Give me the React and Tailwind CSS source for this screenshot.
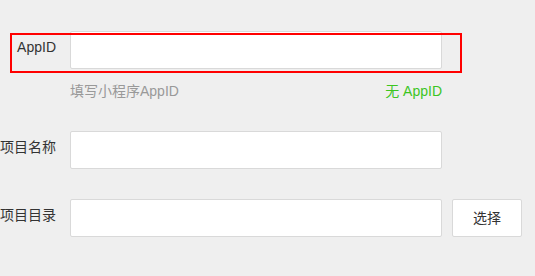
export default function App() {
  return (
    <div className="h-[276px] w-full overflow-hidden bg-[#efefef] pt-[31px] font-['Liberation_Sans','Noto_Sans_CJK_SC',sans-serif] text-[14px] text-[#333]">
      <div className="relative flex items-start gap-[14px]">
        <label className="w-[56px] text-right leading-[33px]">AppID</label>
        <input className="h-[38px] w-[372px] rounded-[2px] border border-[#d9d9d9] bg-white px-2 outline-none" />
        <div className="pointer-events-none absolute left-[10px] top-[2px] h-[40px] w-[452px] border-2 border-[#ff0000]" />
      </div>
      <div className="ml-[70px] mt-[12px] flex w-[372px] justify-between leading-[20px]">
        <span className="text-[#999]">填写小程序AppID</span>
        <span className="text-[#3cc51f]">无 AppID</span>
      </div>

      <div className="mt-[30px] flex items-start gap-[14px]">
        <label className="w-[56px] text-right leading-[33px]">项目名称</label>
        <input className="h-[38px] w-[372px] rounded-[2px] border border-[#d9d9d9] bg-white px-2 outline-none" />
      </div>

      <div className="mt-[30px] flex items-start gap-[14px]">
        <label className="w-[56px] text-right leading-[33px]">项目目录</label>
        <input className="h-[38px] w-[372px] rounded-[2px] border border-[#d9d9d9] bg-white px-2 outline-none" />
        <button className="-ml-[4px] h-[38px] w-[70px] rounded-[2px] border border-[#d9d9d9] bg-white text-[#333]">选择</button>
      </div>
    </div>
  );
}
